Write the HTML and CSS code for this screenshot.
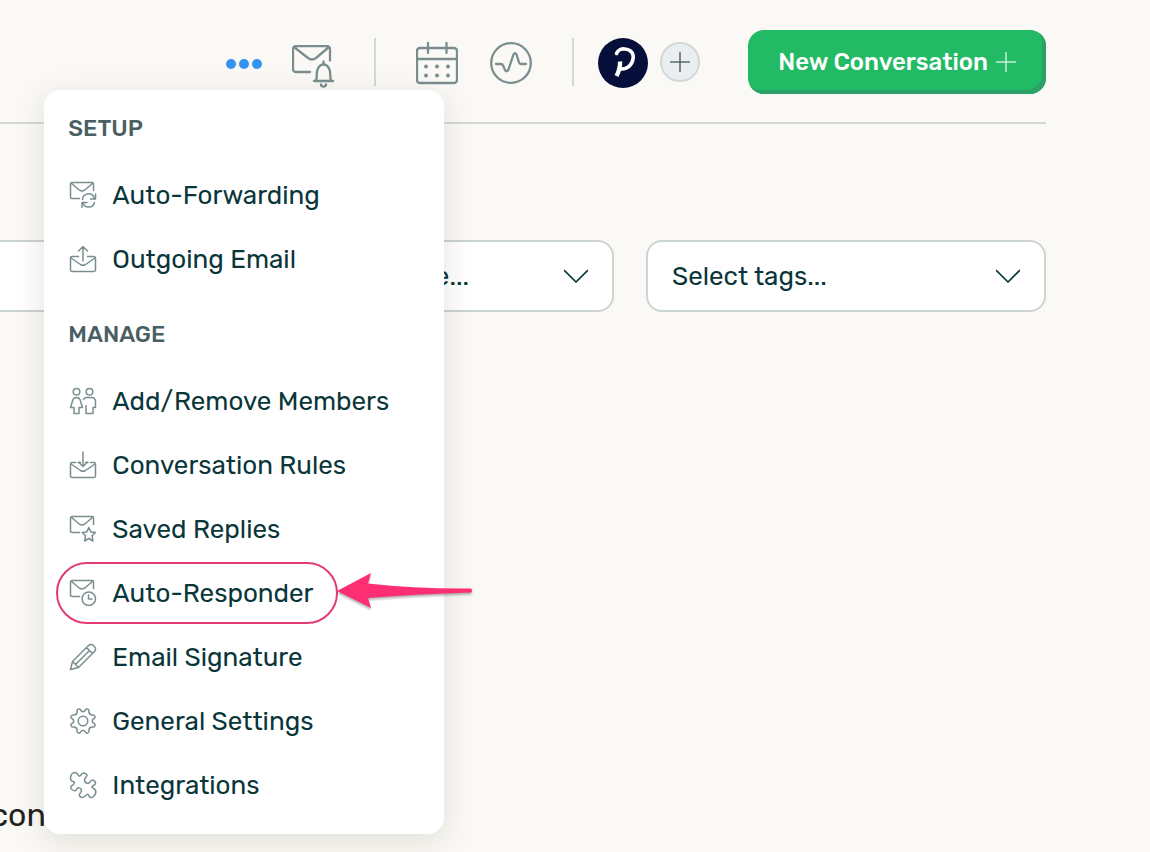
FILE: index.html
```html
<!DOCTYPE html>
<html lang="en">
<head>
  <meta charset="UTF-8">
  <meta name="viewport" content="width=device-width, initial-scale=1.0">
  <title>Conversations</title>
  <link rel="stylesheet" href="styles.css">
</head>
<body>
  <div class="page">
    <header class="topbar">
      <div class="more">
        <button class="icon-btn" type="button" aria-label="More options" aria-expanded="true">
          <svg width="36" height="36" viewBox="0 0 36 36" fill="#3593ef">
            <circle cx="5" cy="19" r="5"/><circle cx="18" cy="19" r="5"/><circle cx="31" cy="19" r="5"/>
          </svg>
        </button>

        <nav class="menu">
          <section class="menu-group">
            <h2>SETUP</h2>
            <ul>
              <li><a href="#">
                <svg class="icon" viewBox="0 0 28 28">
                  <path d="M24.500 9.500V3a1.500 1.500 0 0 0-1.500-1.500H3A1.500 1.500 0 0 0 1.500 3v13A1.500 1.500 0 0 0 3 17.500h7.500M2 2l8.500 7.200q2.500 1.800 5 0L24 2"/>
                  <path d="M13.500 18.500a6 6 0 0 1 11.500-2l1 1.500M26.500 13v5h-5M25.500 21.500a6 6 0 0 1-11.500.5l-1-.5M13 26.500v-5h5"/>
                </svg>
                Auto-Forwarding</a></li>
              <li><a href="#">
                <svg class="icon" viewBox="0 0 28 28">
                  <path d="M9.500 11.500H3A1.500 1.500 0 0 0 1.500 13v12A1.500 1.500 0 0 0 3 26.500h22a1.500 1.500 0 0 0 1.500-1.500V13a1.500 1.500 0 0 0-1.500-1.500h-6.500M2 13l9.500 6.500q2.500 1.500 5 0L26 13M14 16V1.500M9.500 6L14 1.500 18.500 6"/>
                </svg>
                Outgoing Email</a></li>
            </ul>
          </section>
          <section class="menu-group">
            <h2>MANAGE</h2>
            <ul>
              <li><a href="#">
                <svg class="icon" viewBox="0 0 28 28">
                  <circle cx="7.500" cy="4.800" r="3.300"/><circle cx="20.500" cy="4.800" r="3.300"/>
                  <path d="M5 26.500v-6H1.500L4 12.500q.8-2 3.500-2t3.500 2l2.500 8H10v6z"/>
                  <path d="M14.500 12.500q1-2 3-2h5q4 0 4 4v6h-2.500v6h-7v-8"/>
                </svg>
                Add/Remove Members</a></li>
              <li><a href="#">
                <svg class="icon" viewBox="0 0 28 28">
                  <path d="M6.500 11.500H3A1.500 1.500 0 0 0 1.500 13v12A1.500 1.500 0 0 0 3 26.500h22a1.500 1.500 0 0 0 1.500-1.500V13a1.500 1.500 0 0 0-1.500-1.500h-3.500M9 11.500h2.500M16.500 11.500H19M2 13l9.500 6.500q2.500 1.500 5 0L26 13M14 1v14M9.500 11L14 15.500 18.500 11"/>
                </svg>
                Conversation Rules</a></li>
              <li><a href="#">
                <svg class="icon" viewBox="0 0 28 28">
                  <path d="M24.500 9.500V3a1.500 1.500 0 0 0-1.500-1.500H3A1.500 1.500 0 0 0 1.500 3v13A1.500 1.500 0 0 0 3 17.500h7.500M2 2l8.500 7.200q2.500 1.800 5 0L24 2"/>
                  <path d="M19.800 12.500l2 4.400 4.700.5-3.500 3.300 1 5.300-4.200-2.500-4.200 2.500 1-5.300-3.500-3.300 4.700-.5z"/>
                </svg>
                Saved Replies</a></li>
              <li class="highlighted"><a href="#">
                <svg class="icon" viewBox="0 0 28 28">
                  <path d="M24.500 9.500V3a1.500 1.500 0 0 0-1.500-1.500H3A1.500 1.500 0 0 0 1.500 3v13A1.500 1.500 0 0 0 3 17.500h7.500M2 2l8.500 7.200q2.500 1.800 5 0L24 2"/>
                  <circle cx="19.800" cy="19.800" r="6.700"/><path d="M19.500 16v4h3.500"/>
                </svg>
                Auto-Responder</a>
                <svg class="arrow" width="140" height="44" viewBox="0 0 140 44">
                  <path d="M0 20L34 2L31 12.500Q80 18 134 17.500Q136 19.500 134 21.500Q80 23 31 27L34 37Z" fill="#fd2e72"/>
                </svg>
              </li>
              <li><a href="#">
                <svg class="icon" viewBox="0 0 28 28">
                  <path d="M1.500 26.500l2-8L19.500 2.500a3.500 3.500 0 0 1 5 0l1 1a3.500 3.500 0 0 1 0 5L9.500 24.500zM3.500 18.500l6 6M17.500 4.500l6 6M20.500 7.500l-14 14"/>
                </svg>
                Email Signature</a></li>
              <li><a href="#">
                <svg class="icon" viewBox="0 0 28 28">
                  <circle cx="14" cy="14" r="4.800"/>
                  <path d="M11.800 3.300Q14 6.300 16.200 3.300Q17.200 1.200 19 2.200Q20.500 2.900 19.900 4.900Q20.100 7.900 23.100 8.100Q25.100 7.500 25.800 9Q26.800 10.800 24.700 11.800Q21.700 14 24.700 16.200Q26.800 17.200 25.800 19Q25.100 20.500 23.100 19.900Q20.100 20.100 19.900 23.100Q20.500 25.100 19 25.800Q17.200 26.800 16.200 24.700Q14 21.700 11.800 24.700Q10.800 26.800 9 25.800Q7.500 25.100 8.100 23.100Q7.900 20.100 4.900 19.900Q2.900 20.500 2.200 19Q1.200 17.200 3.300 16.200Q6.300 14 3.300 11.800Q1.200 10.800 2.200 9Q2.900 7.500 4.900 8.100Q7.900 7.900 8.100 4.900Q7.500 2.900 9 2.200Q10.800 1.200 11.800 3.300Z"/>
                </svg>
                General Settings</a></li>
              <li><a href="#">
                <svg class="icon" viewBox="0 0 28 28">
                  <path d="M2 4.500C3 1.500 6 .8 8 2.500C9.500 4 9 5 10.500 5C12 5 12 2 14.500 2C16 2 18 3.500 18 4.500C17.500 6 15.500 6.500 15.500 9C15.500 12.500 19.500 13 21 11C22 9 22.500 8.500 24 9C25.500 9.500 26.500 11 26.500 12.500C26 14.500 23 14.500 23 16C23 17.500 25 17 26 18.500C27.500 21 26.500 24 24 26C22.500 27 20.500 26.500 20 25C19.500 23.500 19 23 18 23.500C16.500 24.500 16 26.500 13 26.500C11.500 26.500 10 25 10.500 23.500C11 22 12.500 21 12.500 19C12 16.500 8.500 16 7.500 18.500C7 20 5 20 3.500 19C2 18 1.300 16.500 2 15.500C3 14 5.500 13.500 5.500 11.500C5 10 3.500 11 2.200 9.500C1.300 8 1.300 6.500 2 4.500Z"/>
                </svg>
                Integrations</a></li>
            </ul>
          </section>
        </nav>
      </div>

      <button class="icon-btn notify" type="button" aria-label="Email notifications">
        <svg class="icon-lg" width="42" height="46" viewBox="0 0 42 46">
          <path d="M38 15.500V4a3 3 0 0 0-3-3H4a3 3 0 0 0-3 3v20a3 3 0 0 0 3 3h14M2 2l14 11q4 3 8 0L37 2"/>
          <path d="M22 36h19M24 35.500c1.500-3 0-7 1.500-11 1.500-4 4-5 6-5s4.500 1 6 5 0 8 1.500 11M31.500 19v-2.500M29 39.500a2.500 2 0 0 0 5 0"/>
        </svg>
      </button>

      <span class="divider wide"></span>

      <button class="icon-btn" type="button" aria-label="Calendar">
        <svg class="icon-lg" width="42" height="44" viewBox="0 0 42 44">
          <rect x="1" y="7" width="40" height="35" rx="3"/>
          <path d="M1 18h40M12 2v10M30.500 2v10"/>
          <g fill="#7a8e90" stroke="none">
            <circle cx="10" cy="25.500" r="2"/><circle cx="21" cy="25.500" r="2"/><circle cx="32" cy="25.500" r="2"/>
            <circle cx="10" cy="34.500" r="2"/><circle cx="21" cy="34.500" r="2"/><circle cx="32" cy="34.500" r="2"/>
          </g>
        </svg>
      </button>

      <button class="icon-btn activity" type="button" aria-label="Activity">
        <svg class="icon-lg" width="42" height="42" viewBox="0 0 42 42">
          <circle cx="21" cy="21" r="19.800"/>
          <path d="M6 22h5q1.500 0 2 1.500l2 4.500q1.700 2.500 3.300 0l5.200-15.500q1.500-2.500 3 0l2.500 8q.5 1.500 2 1.500h5"/>
        </svg>
      </button>

      <span class="divider"></span>

      <a class="avatar" href="#" aria-label="Mailbox">
        <svg width="50" height="50" viewBox="0 0 50 50">
          <circle cx="25" cy="25" r="25" fill="#060e3a"/>
          <path d="M18.500 15.500C20 11.500 24 10.500 27 11C33 11.500 36 15.500 35 21C34 27 29.500 31.500 22.500 31" fill="none" stroke="#fff" stroke-width="3.600" stroke-linecap="round"/>
          <path d="M22 23.500q.5 7-3.500 14.500" fill="none" stroke="#fff" stroke-width="4.400"/>
        </svg>
      </a>
      <button class="add-btn" type="button" aria-label="Add mailbox">
        <svg width="20" height="20" viewBox="0 0 20 20" stroke="#54686c" stroke-width="1.500"><path d="M10 0v20M0 10h20"/></svg>
      </button>

      <button class="new-btn" type="button">
        New Conversation
        <svg width="20" height="20" viewBox="0 0 20 20" stroke="#c8f0d8" stroke-width="1.500"><path d="M10 0v20M0 10h20"/></svg>
      </button>
    </header>

    <main>
      <form class="filters">
        <div class="field">
          <select aria-label="Status"><option>Select status...</option></select>
          <svg width="24" height="14" viewBox="0 0 24 14"><path d="M0 1l12 12L24 1"/></svg>
        </div>
        <div class="field">
          <select aria-label="User name"><option>Select user name...</option></select>
          <svg width="24" height="14" viewBox="0 0 24 14"><path d="M0 1l12 12L24 1"/></svg>
        </div>
        <div class="field">
          <select aria-label="Tags"><option>Select tags...</option></select>
          <svg width="24" height="14" viewBox="0 0 24 14"><path d="M0 1l12 12L24 1"/></svg>
        </div>
      </form>
      <p class="empty">No conversations</p>
    </main>
  </div>
</body>
</html>
```
FILE: styles.css
```css
*,
*::before {
    box-sizing: border-box;
    margin: 0;
    padding: 0;
}

body {
    min-height: 100vh;
    overflow-x: hidden;
    background: #faf9f5;
    color: #0a363a;
    font-family: Rubik, Roboto, sans-serif;
    font-size: 26px;
}

button,
select {
    font: inherit;
    color: inherit;
    border: none;
    background: none;
    cursor: pointer;
}

svg {
    display: block;
    flex-shrink: 0;
}

/* page content runs past the left edge of the window */
.page {
    margin: 0 104px 0 -218px;
}

.topbar {
    display: flex;
    justify-content: flex-end;
    align-items: center;
    padding: 30px 0 28px;
    border-bottom: 2px solid #d6d6d2;
}

.icon-btn,
.avatar {
    padding-top: 2px;
}

.icon-lg {
    fill: none;
    stroke: #7a8e90;
    stroke-width: 2.3;
    stroke-linecap: round;
    stroke-linejoin: round;
}

.notify {
    margin-left: 30px;
    padding-top: 12px;
}

.activity {
    margin-left: 32px;
}

.divider {
    width: 2px;
    height: 48px;
    margin: 0 24px 0 40px;
    background: #d6d6d2;
}

.divider.wide {
    margin-right: 40px;
}

.add-btn {
    display: flex;
    align-items: center;
    justify-content: center;
    width: 40px;
    height: 40px;
    margin: 0 48px 0 12px;
    border: 2px solid #d2d8d8;
    border-radius: 50%;
    background: #eaeeee;
}

.new-btn {
    display: flex;
    align-items: center;
    gap: 8px;
    height: 64px;
    padding: 0 30px;
    border-radius: 16px;
    background: #22ba64;
    box-shadow: inset -4px -4px 0 #2ba068;
    color: #fff;
    font-size: 24px;
    font-weight: 500;
}

/* dropdown menu */
.more {
    display: flex;
    position: relative;
}

.menu {
    position: absolute;
    z-index: 10;
    top: calc(100% + 9px);
    left: 50%;
    width: 400px;
    padding: 23px 0 17px;
    transform: translateX(-50%);
    border-radius: 16px;
    background: #fff;
    box-shadow: 0 8px 32px rgba(40, 30, 20, 0.12);
}

.menu-group + .menu-group {
    margin-top: 28px;
}

.menu h2 {
    margin: 0 24px 20px;
    color: #4a5f63;
    font-size: 23px;
    font-weight: 500;
    line-height: 30px;
}

.menu ul {
    list-style: none;
}

.menu a {
    display: flex;
    align-items: center;
    gap: 15px;
    height: 64px;
    padding: 0 25px;
    color: inherit;
    text-decoration: none;
    white-space: nowrap;
}

.icon {
    width: 28px;
    height: 28px;
    fill: none;
    stroke: #7a8e90;
    stroke-width: 1.5;
    stroke-linecap: round;
    stroke-linejoin: round;
}

.highlighted {
    position: relative;
}

.highlighted::before {
    content: "";
    position: absolute;
    top: 1px;
    left: 12px;
    width: 282px;
    height: 62px;
    border: 2px solid #e23b76;
    border-radius: 31px;
}

.arrow {
    position: absolute;
    top: 10px;
    left: 293px;
    filter: drop-shadow(0 2px 1px rgba(0, 0, 0, 0.3));
}

/* filters */
.filters {
    display: grid;
    grid-template-columns: repeat(3, 1fr);
    gap: 32px;
    margin-top: 116px;
}

.field {
    display: grid;
    align-items: center;
}

.field select {
    grid-area: 1 / 1;
    width: 100%;
    height: 72px;
    padding: 0 60px 0 24px;
    border: 2px solid #ccd3d3;
    border-radius: 16px;
    background: #fff;
    appearance: none;
}

.field svg {
    grid-area: 1 / 1;
    justify-self: end;
    margin-right: 26px;
    fill: none;
    stroke: #0a363a;
    stroke-width: 1.6;
    pointer-events: none;
}

.empty {
    margin-top: 480px;
    padding-left: 160px;
    color: #222;
    font-size: 32px;
    line-height: 46px;
}
```
